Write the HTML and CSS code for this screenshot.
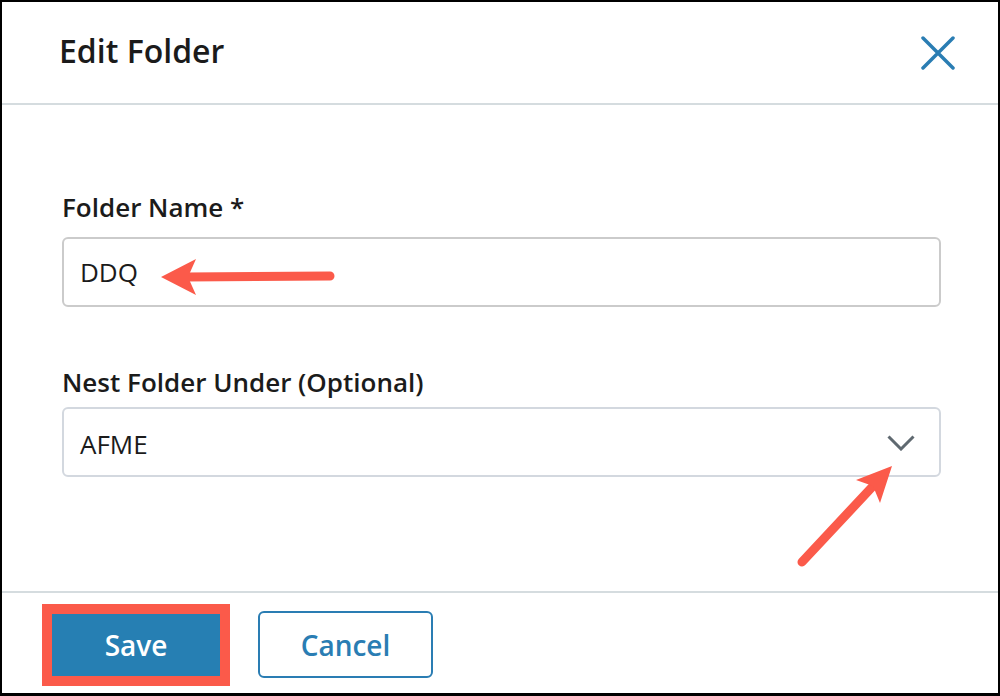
FILE: index.html
```html
<!DOCTYPE html>
<html lang="en">
<head>
  <meta charset="UTF-8"/>
  <title>Edit Folder</title>
  <link rel="stylesheet" href="styles.css">
</head>
<body>

<div class="frame">
  <div class="header">
    <h1>Edit Folder</h1>
    <svg class="close" width="34" height="34" viewBox="0 0 34 34">
      <path d="M2 2 L32 32 M32 2 L2 32" stroke="#2a7db3" stroke-width="3.5" stroke-linecap="round"/>
    </svg>
  </div>

  <div class="content">
    <label class="label first" for="folderName">Folder Name *</label>
    <input class="field" id="folderName" type="text" value="DDQ">

    <div class="label second">Nest Folder Under (Optional)</div>
    <div class="field select">
      <span>AFME</span>
      <svg width="28" height="16" viewBox="0 0 28 16">
        <path d="M1.5 1.5 L14 14 L26.5 1.5" fill="none" stroke="#5f6970" stroke-width="3"/>
      </svg>
    </div>
  </div>

  <div class="footer">
    <button class="btn save">Save</button>
    <button class="btn cancel">Cancel</button>
  </div>

  <!-- annotation arrows -->
  <svg class="marks" width="1000" height="696" viewBox="0 0 1000 696">
    <line x1="186" y1="277" x2="330" y2="276" stroke="#fb5a4a" stroke-width="9" stroke-linecap="round"/>
    <polygon points="161,277 196,259 188,277 196,295" fill="#fb5a4a"/>
    <line x1="874" y1="485" x2="802" y2="562" stroke="#fb5a4a" stroke-width="9" stroke-linecap="round"/>
    <polygon points="892,466 880,503 873,486 856,480" fill="#fb5a4a"/>
  </svg>
</div>

</body>
</html>
```

FILE: styles.css
```css
:root {
  --azul: #267fb3;
  --rojo: #fb5a4a;
  --linea: #d5dcdf;
  --texto: #1b1b1b;
}
* {
  margin: 0; padding: 0; box-sizing: border-box;
  font-family: 'Open Sans', 'Noto Sans', sans-serif;
}
body {
  background: #fff;
  color: var(--texto);
}
.frame {
  position: relative;
  width: 1000px;
  height: 696px;
  border: 2px solid #000;
  border-bottom-width: 3px;
  background: #fff;
  display: flex;
  flex-direction: column;
}
.header {
  height: 103px;
  display: flex;
  align-items: center;
  justify-content: space-between;
  padding: 0 43px 4px 57px;
  border-bottom: 2px solid var(--linea);
}
.header h1 {
  font-size: 32px;
  font-weight: 600;
  color: var(--texto);
}
.close {
  display: block;
  margin-top: 4px;
}
.content {
  flex: 1;
  display: flex;
  flex-direction: column;
  padding: 84px 57px 0 60px;
  border-bottom: 2px solid var(--linea);
}
.label {
  font-size: 26px;
  font-weight: 600;
  line-height: 36px;
}
.label.first {
  margin-bottom: 12px;
}
.label.second {
  margin-top: 57px;
  margin-bottom: 7px;
}
.field {
  width: 100%;
  height: 70px;
  border: 2px solid #cbcbcb;
  border-radius: 6px;
  padding: 0 16px;
  font-size: 26px;
  color: var(--texto);
  background: #fff;
  outline: none;
}
.select {
  display: flex;
  align-items: center;
  justify-content: space-between;
  border-color: #d3d8df;
  padding-right: 24px;
}
.select span {
  margin-top: 4px;
}
.select svg {
  display: block;
  margin-top: 2px;
}
.footer {
  height: 100px;
  display: flex;
  align-items: center;
  gap: 38px;
  padding: 3px 0 0 50px;
}
.btn {
  font-size: 28px;
  font-weight: 600;
  border-radius: 6px;
  cursor: pointer;
}
.save {
  width: 168px;
  height: 62px;
  border: none;
  border-radius: 0;
  background: var(--azul);
  color: #fff;
  /* marco rojo de la anotación */
  box-shadow: 0 0 0 10px var(--rojo);
}
.cancel {
  width: 175px;
  height: 67px;
  border: 2px solid #2a7db3;
  background: #fff;
  color: #2a7db3;
}
.marks {
  position: absolute;
  top: -2px;
  left: -2px;
  pointer-events: none;
}
```
